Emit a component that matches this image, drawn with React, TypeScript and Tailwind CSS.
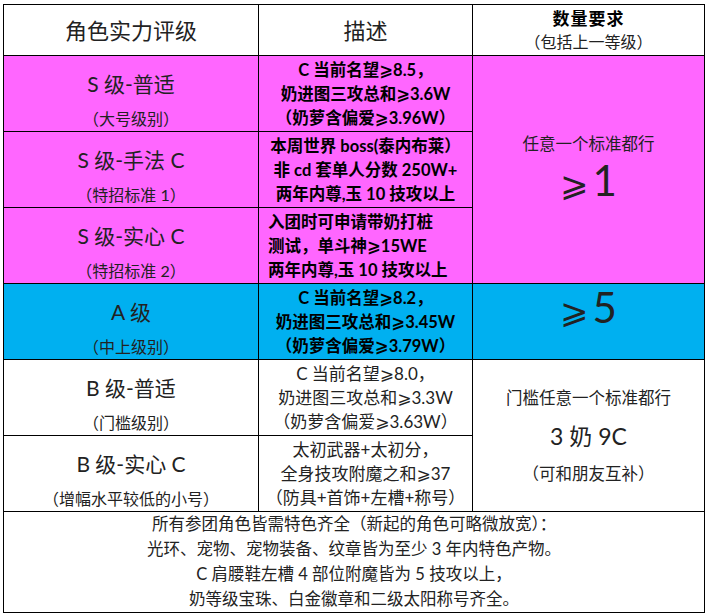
const font = "font-['Lato','Noto_Sans_CJK_SC','DejaVu_Sans',sans-serif]";

type Tier = {
  title: string;
  sub: string;
  desc: string[];
  bold: boolean;
  left?: boolean;
  bg: string;
};

const tiers: Tier[] = [
  {
    title: "S 级-普适",
    sub: "（大号级别）",
    desc: ["C 当前名望⩾8.5，", "奶进图三攻总和⩾3.6W", "（奶萝含偏爱⩾3.96W）"],
    bold: true,
    bg: "bg-[#ff66ff]",
  },
  {
    title: "S 级-手法 C",
    sub: "（特招标准 1）",
    desc: ["本周世界 boss(泰内布莱）", "非 cd 套单人分数 250W+", "两年内尊,玉 10 技攻以上"],
    bold: true,
    bg: "bg-[#ff66ff]",
  },
  {
    title: "S 级-实心 C",
    sub: "（特招标准 2）",
    desc: ["入团时可申请带奶打桩", "测试，单斗神⩾15WE", "两年内尊,玉 10 技攻以上"],
    bold: true,
    left: true,
    bg: "bg-[#ff66ff]",
  },
  {
    title: "A 级",
    sub: "（中上级别）",
    desc: ["C 当前名望⩾8.2，", "奶进图三攻总和⩾3.45W", "（奶萝含偏爱⩾3.79W）"],
    bold: true,
    bg: "bg-[#00b0f0]",
  },
  {
    title: "B 级-普适",
    sub: "（门槛级别）",
    desc: ["C 当前名望⩾8.0，", "奶进图三攻总和⩾3.3W", "（奶萝含偏爱⩾3.63W）"],
    bold: false,
    bg: "bg-white",
  },
  {
    title: "B 级-实心 C",
    sub: "（增幅水平较低的小号）",
    desc: ["太初武器+太初分，", "全身技攻附魔之和⩾37", "（防具+首饰+左槽+称号）"],
    bold: false,
    bg: "bg-white",
  },
];

function TierCells({ tier, row }: { tier: Tier; row: number }) {
  const rowClass = ["row-start-2", "row-start-3", "row-start-4", "row-start-5", "row-start-6", "row-start-7"][row];
  return (
    <>
      <div className={`${rowClass} col-start-1 flex flex-col items-center pt-[14px] border-r border-b border-black ${tier.bg}`}>
        <div className="text-[21px] leading-[28px] text-[#222]">{tier.title}</div>
        <div className="mt-[9px] text-[16px] leading-[24px] text-[#222]">{tier.sub}</div>
      </div>
      <div
        className={`${rowClass} col-start-2 flex flex-col justify-center border-r border-b border-black leading-[24px] ${tier.bg} ${
          tier.bold ? "text-[16.5px] font-bold text-black" : "text-[17px] text-[#222]"
        } ${tier.left ? "items-start pl-[9px]" : "items-center"}`}
      >
        {tier.desc.map((line) => (
          <div key={line} className="whitespace-nowrap">
            {line}
          </div>
        ))}
      </div>
    </>
  );
}

function AtLeast({ n }: { n: string }) {
  return (
    <div className="flex items-baseline text-[42px] leading-[48px] text-[#222]">
      <span className="mr-[4px] text-[34px]">⩾</span>
      <span>{n}</span>
    </div>
  );
}

export default function App() {
  return (
    <div className={`min-h-[615px] w-[710px] bg-white pl-[3px] pt-[4px] ${font}`}>
      <div className="grid w-[702px] grid-cols-[255px_214px_232px] grid-rows-[51px_76px_76px_76px_76px_76px_76px_101px] border-l border-t border-black">
        {/* header */}
        <div className="flex items-center justify-center border-r border-b border-black text-[22px] text-[#222]">
          角色实力评级
        </div>
        <div className="flex items-center justify-center border-r border-b border-black text-[22px] text-[#222]">
          描述
        </div>
        <div className="flex flex-col items-center justify-center border-r border-b border-black leading-[23px]">
          <div className="text-[17px] font-bold tracking-[1px] text-black">数量要求</div>
          <div className="text-[16px] text-[#222]">（包括上一等级）</div>
        </div>

        {tiers.map((tier, i) => (
          <TierCells key={tier.title} tier={tier} row={i} />
        ))}

        {/* requirement column */}
        <div className="col-start-3 row-start-2 row-span-3 flex flex-col items-center justify-center border-r border-b border-black bg-[#ff66ff] text-[#222]">
          <div className="text-[16.5px] leading-[24px]">任意一个标准都行</div>
          <AtLeast n="1" />
        </div>
        <div className="col-start-3 row-start-5 flex items-center justify-center pb-[26px] border-r border-b border-black bg-[#00b0f0]">
          <AtLeast n="5" />
        </div>
        <div className="col-start-3 row-start-6 row-span-2 flex flex-col items-center justify-center border-r border-b border-black text-[#222] leading-[38px]">
          <div className="text-[16.5px]">门槛任意一个标准都行</div>
          <div className="text-[23px]">3 奶 9C</div>
          <div className="text-[16.5px]">（可和朋友互补）</div>
        </div>

        {/* footer */}
        <div className="col-span-3 row-start-8 flex flex-col items-center justify-center border-r border-b border-black text-[16.5px] leading-[25px] text-[#222]">
          <div>所有参团角色皆需特色齐全（新起的角色可略微放宽）：</div>
          <div>光环、宠物、宠物装备、纹章皆为至少 3 年内特色产物。</div>
          <div>C 肩腰鞋左槽 4 部位附魔皆为 5 技攻以上，</div>
          <div>奶等级宝珠、白金徽章和二级太阳称号齐全。</div>
        </div>
      </div>
    </div>
  );
}
